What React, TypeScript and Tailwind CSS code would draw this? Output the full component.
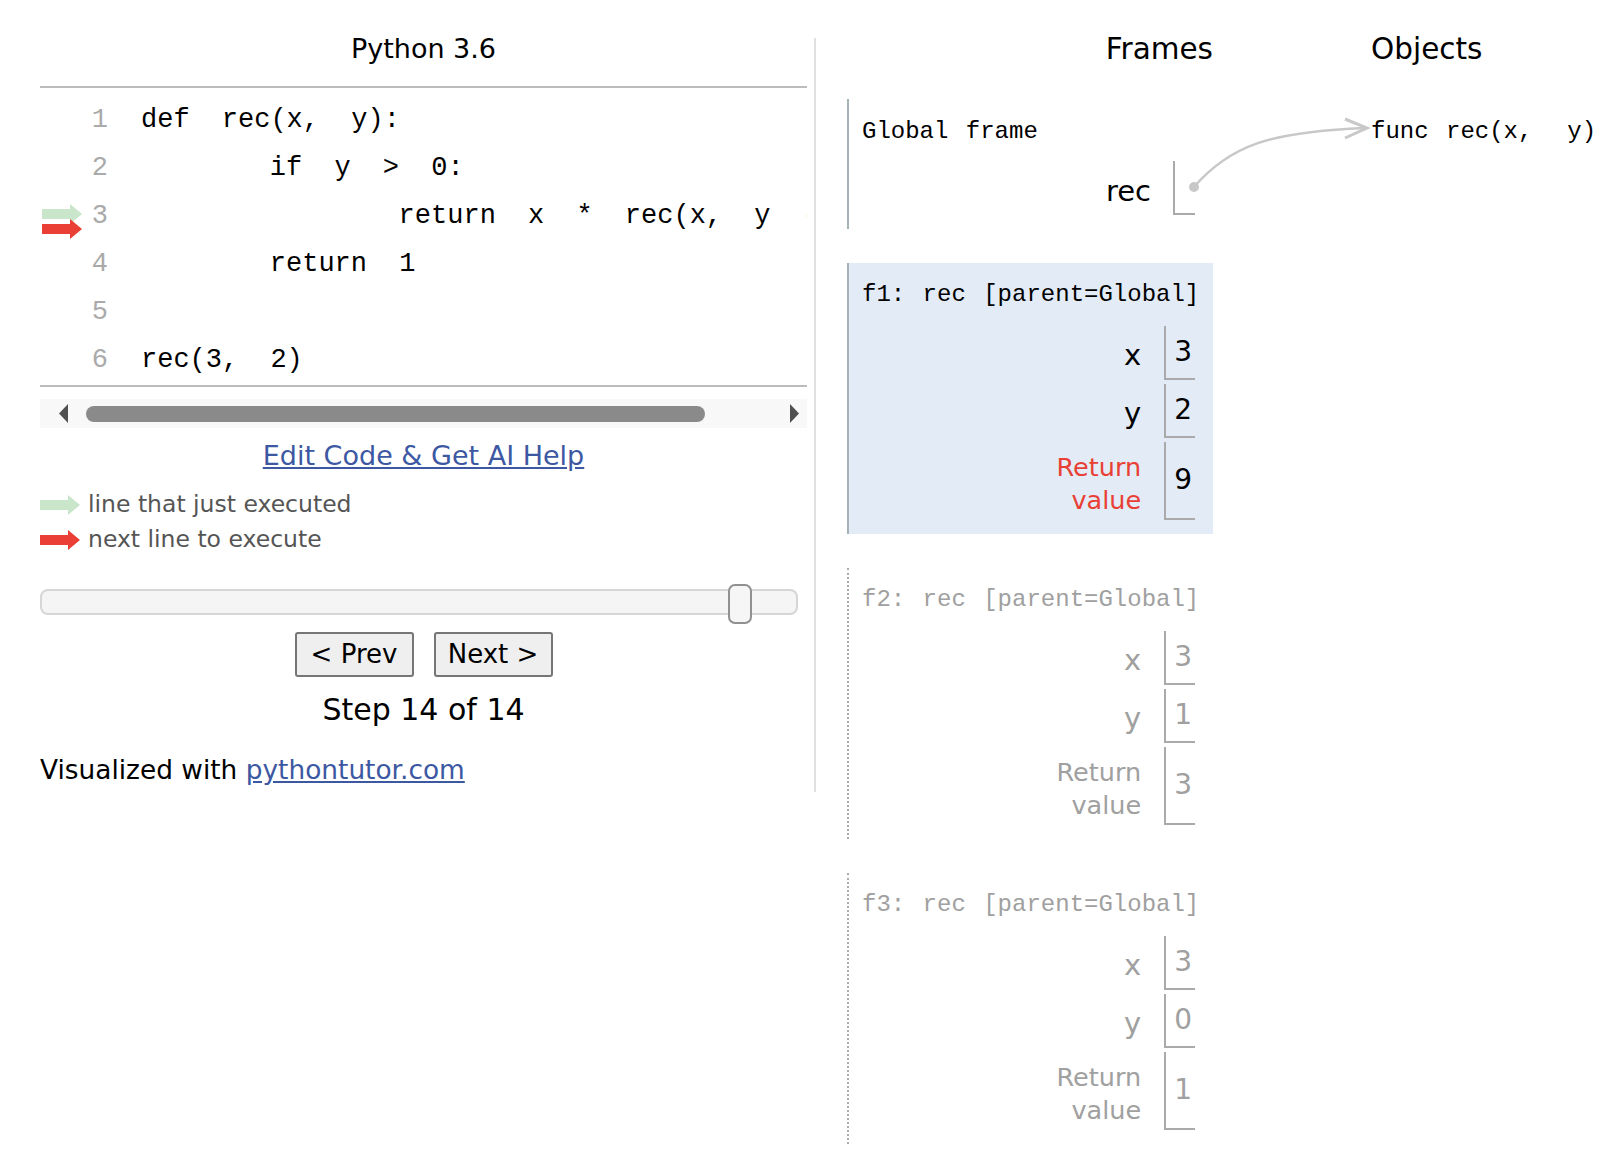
import React from "react";

const sans = "font-['DejaVu_Sans',sans-serif]";
const mono = "font-['Liberation_Mono',monospace]";

interface Row {
  label: string;
  value: string;
  ret?: boolean;
}

interface Frame {
  title: string;
  kind: "global" | "active" | "zombie";
  rows: Row[];
}

const codeLines = [
  "def rec(x, y):",
  "    if y > 0:",
  "        return x * rec(x, y - 1)",
  "    return 1",
  "",
  "rec(3, 2)",
];

const frames: Frame[] = [
  {
    title: "f1: rec [parent=Global]",
    kind: "active",
    rows: [
      { label: "x", value: "3" },
      { label: "y", value: "2" },
      { label: "Return value", value: "9", ret: true },
    ],
  },
  {
    title: "f2: rec [parent=Global]",
    kind: "zombie",
    rows: [
      { label: "x", value: "3" },
      { label: "y", value: "1" },
      { label: "Return value", value: "3", ret: true },
    ],
  },
  {
    title: "f3: rec [parent=Global]",
    kind: "zombie",
    rows: [
      { label: "x", value: "3" },
      { label: "y", value: "0" },
      { label: "Return value", value: "1", ret: true },
    ],
  },
];

function Arrow({ color, cy }: { color: string; cy: number }) {
  return (
    <polygon
      points={`0,${cy - 5} 28,${cy - 5} 28,${cy - 10} 40,${cy} 28,${cy + 10} 28,${cy + 5} 0,${cy + 5}`}
      fill={color}
    />
  );
}

function StackFrame({ frame }: { frame: Frame }) {
  const zombie = frame.kind === "zombie";
  return (
    <div
      className={`pl-[13px] pr-[18px] pt-[15px] pb-[14px] ${
        zombie
          ? "border-l-2 border-dotted border-[#aaaaaa]"
          : "border-l-2 border-[#a6b3b6] bg-[#e2ebf6]"
      }`}
    >
      <div
        className={`${mono} text-[24px] h-[34px] leading-[34px] whitespace-pre [word-spacing:3px] ${
          zombie ? "text-[#a0a0a0]" : "text-black"
        }`}
      >
        {frame.title}
      </div>
      <div className="mt-[14px] flex flex-col items-end gap-[4px]">
        {frame.rows.map((r, i) => (
          <div key={i} className="flex items-center">
            <div
              className={`${sans} text-right pr-[23px] ${
                r.ret ? "text-[25.5px] leading-[33px] pt-[6px]" : "text-[29px] leading-[30px] pt-[3px]"
              } ${zombie ? "text-[#a0a0a0]" : r.ret ? "text-[#e93f34]" : "text-black"}`}
            >
              {r.ret ? (
                <>
                  Return
                  <br />
                  value
                </>
              ) : (
                r.label
              )}
            </div>
            <div
              className={`border-l-2 border-b-2 border-[#aaaaaa] ${r.ret ? "h-[78px]" : "h-[54px]"} flex items-center pl-[8px] pr-[3px] ${sans} text-[28px] ${
                zombie ? "text-[#a0a0a0]" : "text-black"
              }`}
            >
              {r.value}
            </div>
          </div>
        ))}
      </div>
    </div>
  );
}

export default function App() {
  return (
    <div className={`relative w-[1606px] h-[1169px] overflow-hidden bg-white flex ${sans}`}>
      {/* left: code + controls */}
      <div className="ml-[40px] mt-[38px] h-[754px] w-[776px] pr-[7px] border-r-2 border-[#e0e0e0] flex flex-col">
        <div className="h-[22px] leading-[22px] text-center text-[27px] text-black">Python 3.6</div>

        <div className="mt-[26px] border-t-2 border-b-2 border-[#bcbcbc] pt-[8px] pb-[1px] overflow-hidden">
          {codeLines.map((line, i) => (
            <div key={i} className="flex h-[48px] items-center">
              <div className="relative w-[50px] h-full shrink-0">
                {i === 2 && (
                  <svg className="absolute left-[2px] top-0" width="42" height="48">
                    <Arrow color="#c9e6ca" cy={22} />
                    <Arrow color="#e93f34" cy={37} />
                  </svg>
                )}
              </div>
              <div className={`${mono} w-[18px] shrink-0 text-right text-[27px] text-[#aaaaaa]`}>{i + 1}</div>
              <div className={`${mono} ml-[33px] whitespace-pre text-[27px] text-black [word-spacing:16px]`}>
                {line}
              </div>
            </div>
          ))}
        </div>

        {/* horizontal scrollbar */}
        <div className="mt-[12px] h-[29px] bg-[#f8f8f8] flex items-center">
          <svg width="46" height="29" className="shrink-0">
            <polygon points="28,5 19,14.5 28,24" fill="#505050" />
          </svg>
          <div className="h-[16px] w-[619px] rounded-full bg-[#8a8a8a]" />
          <div className="flex-1" />
          <svg width="26" height="29" className="shrink-0">
            <polygon points="9,5 18,14.5 9,24" fill="#505050" />
          </svg>
        </div>

        <div className="mt-[12px] h-[32px] leading-[32px] text-center">
          <a className="text-[27px] text-[#3d58a2] underline cursor-pointer">Edit Code &amp; Get AI Help</a>
        </div>

        {/* legend */}
        <div className="mt-[15px] flex flex-col text-[23.5px] text-[#555555]">
          <div className="flex items-center h-[35px]">
            <svg width="40" height="22" className="shrink-0">
              <Arrow color="#c9e6ca" cy={11} />
            </svg>
            <span className="ml-[8px]">line that just executed</span>
          </div>
          <div className="flex items-center h-[35px]">
            <svg width="40" height="22" className="shrink-0">
              <Arrow color="#e93f34" cy={11} />
            </svg>
            <span className="ml-[8px]">next line to execute</span>
          </div>
        </div>

        {/* step slider */}
        <div className="relative mt-[27px] h-[40px] w-[758px]">
          <div className="mt-[5px] h-[26px] w-full rounded-[8px] border-2 border-[#d6d6d6] bg-[#f5f5f5]" />
          <div className="absolute left-[688px] top-0 w-[24px] h-[40px] rounded-[7px] border-2 border-[#909090] bg-[#f6f6f6]" />
        </div>

        <div className="mt-[8px] flex justify-center gap-[20px]">
          <button className="w-[119px] h-[45px] rounded-[3px] border-2 border-[#767676] bg-[#efefef] text-[26px] text-black">
            &lt; Prev
          </button>
          <button className="w-[119px] h-[45px] rounded-[3px] border-2 border-[#767676] bg-[#efefef] text-[26px] text-black">
            Next &gt;
          </button>
        </div>

        <div className="mt-[15px] h-[36px] leading-[36px] text-center text-[30px] text-black">Step 14 of 14</div>

        <div className="mt-[26px] h-[32px] leading-[32px] text-[26.4px] text-black">
          Visualized with <a className="text-[#3d58a2] underline cursor-pointer">pythontutor.com</a>
        </div>
      </div>

      {/* right: frames + objects */}
      <div className="pl-[31px] pt-[35px] flex flex-col">
        <div className="flex h-[28px] leading-[28px] text-[29.5px] text-black">
          <div className="w-[366px] text-right">Frames</div>
          <div className="ml-[158px]">Objects</div>
        </div>

        <div className="mt-[36px] flex items-start">
          <div className="w-[366px] flex flex-col gap-[34px]">
            {/* global frame */}
            <div className="pl-[13px] pr-[18px] pt-[16px] pb-[14px] border-l-2 border-[#a6b3b6]">
              <div className={`${mono} text-[24px] h-[34px] leading-[34px] whitespace-pre [word-spacing:3px] text-black`}>
                Global frame
              </div>
              <div className="mt-[12px] flex justify-end items-center">
                <div className="text-[29px] text-black pr-[22px] leading-[30px] pt-[5px]">rec</div>
                <div className="h-[54px] w-[22px] border-l-2 border-b-2 border-[#aaaaaa] flex items-center pl-[14px]">
                  <span className="w-[10px] h-[10px] shrink-0 rounded-full bg-[#c8c8c8]" />
                </div>
              </div>
            </div>

            {frames.map((f, i) => (
              <StackFrame key={i} frame={f} />
            ))}
          </div>

          <div className={`ml-[158px] pt-[16px] h-[50px] leading-[34px] ${mono} text-[24px] whitespace-pre [word-spacing:3px] text-black`}>
            func rec(x,  y)
          </div>
        </div>
      </div>

      {/* pointer from global rec to function object */}
      <svg className="absolute inset-0 pointer-events-none" width="1606" height="1169">
        <path d="M1193 188 C1230 145 1270 132 1364 128" stroke="#c8c8c8" strokeWidth="2.5" fill="none" />
        <polyline points="1345,119 1367,128 1345,138" stroke="#c8c8c8" strokeWidth="3" fill="none" />
      </svg>
    </div>
  );
}
